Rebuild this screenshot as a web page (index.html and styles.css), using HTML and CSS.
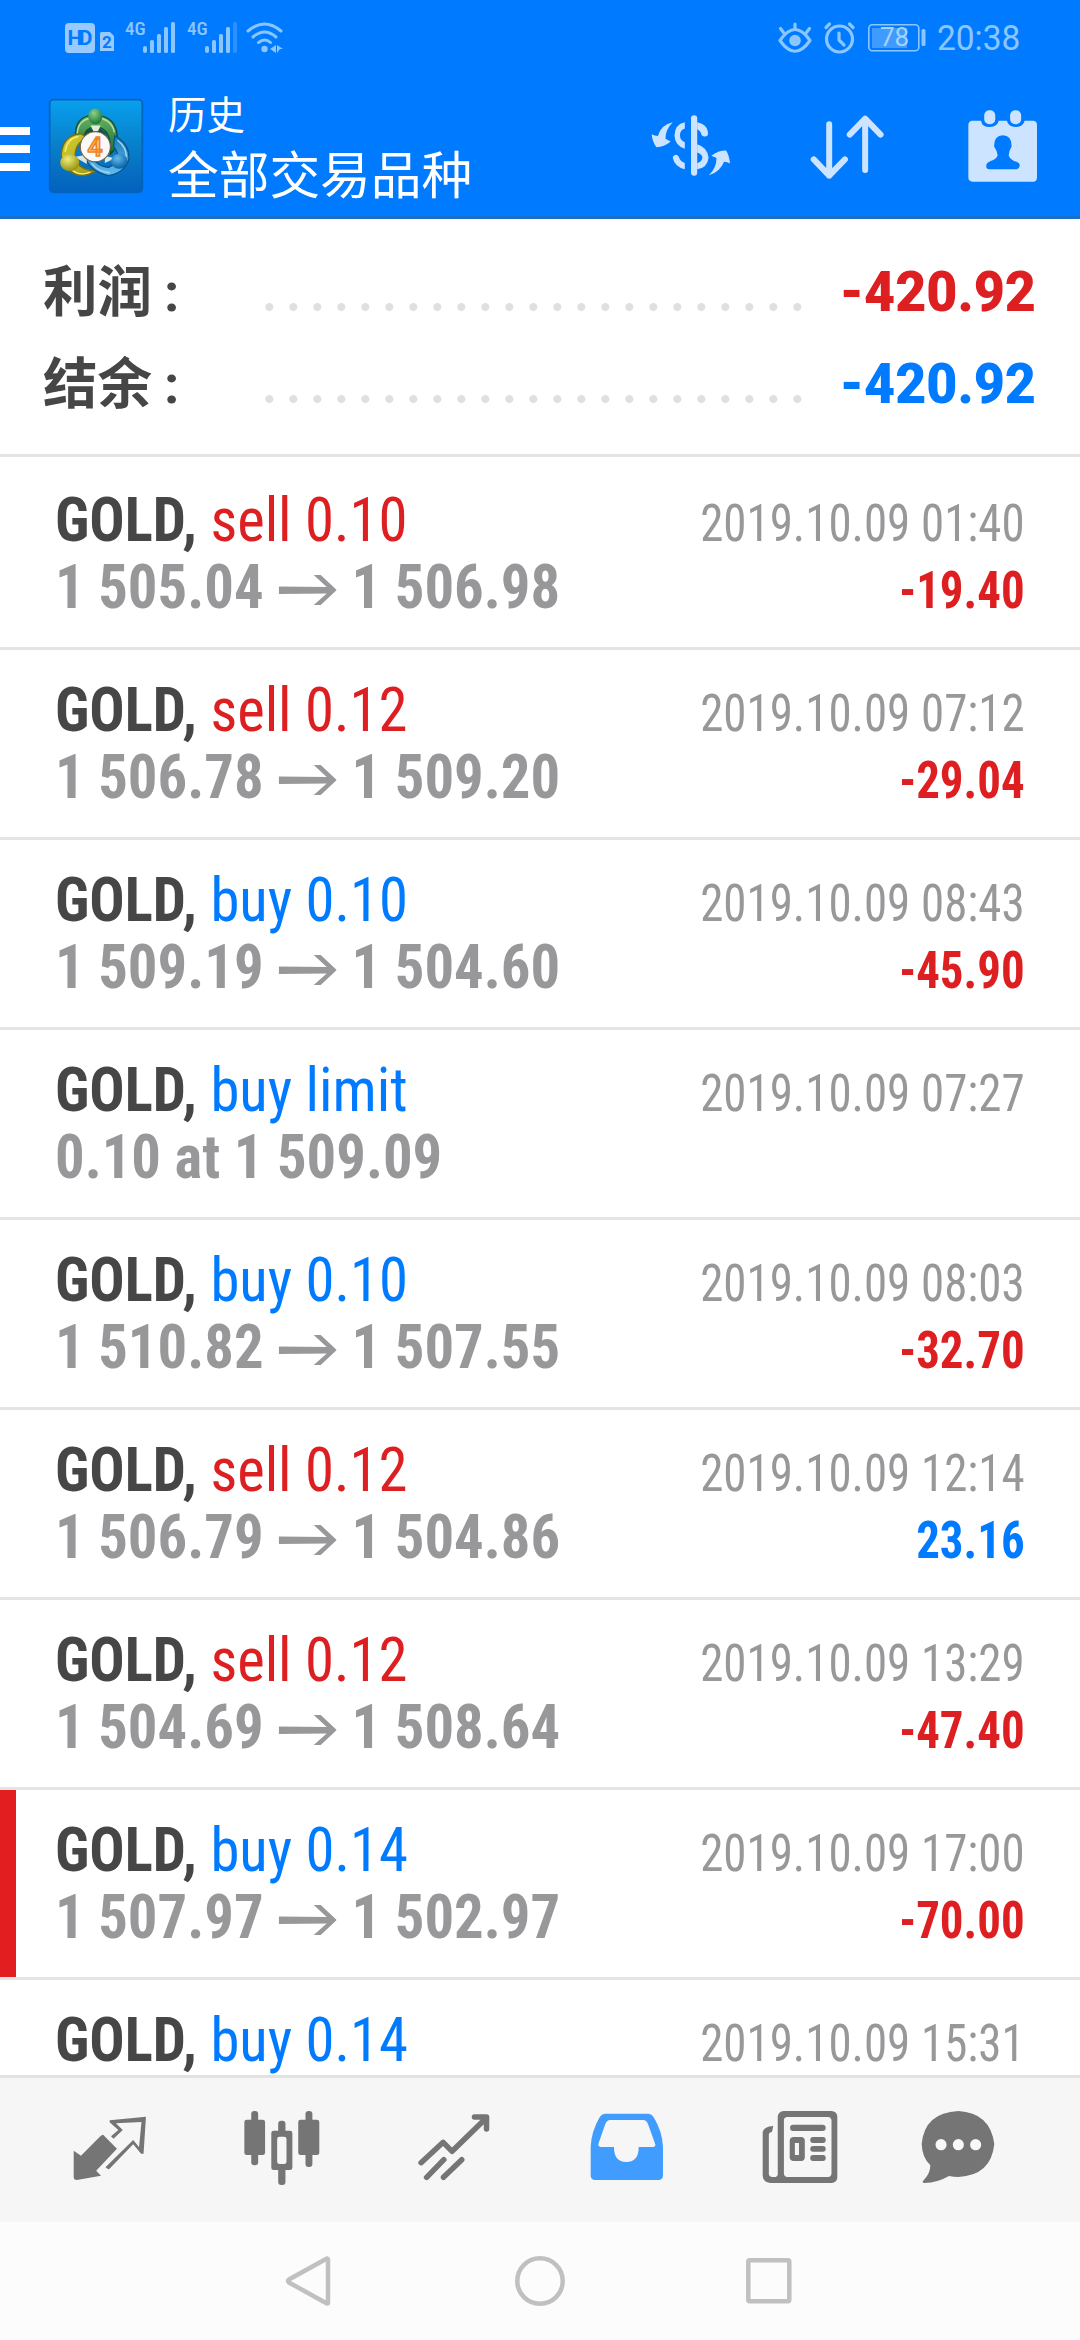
FILE: index.html
```html
<!DOCTYPE html>
<html lang="zh-CN">
<head>
<meta charset="utf-8">
<title>历史</title>
<link rel="stylesheet" href="styles.css">
</head>
<body>
<div class="screen">
  <header class="top">
    <div class="status">
      <svg class="hd" viewBox="0 0 50 32"><rect x="0" y="1" width="30" height="30" rx="4" fill="#99caff"/><text x="15" y="22.500" text-anchor="middle" textLength="25" class="hd-text">HD</text><path d="M36 10h9l4 4v15h-14v-18z" fill="#99caff"/><text x="42" y="26" text-anchor="middle" class="sim-text">2</text></svg>
      <span class="net">4G</span>
      <svg class="bars" viewBox="0 0 33 31"><g fill="#8cc6ff"><rect x="0" y="24" width="4" height="7" rx="2"/><rect x="7" y="18" width="4" height="13" rx="1.5"/><rect x="14" y="12" width="4" height="19" rx="1.5"/><rect x="21" y="5" width="4" height="26" rx="1.5"/><rect x="28" y="0" width="4" height="31" rx="1.5"/></g></svg>
      <span class="net second">4G</span>
      <svg class="bars" viewBox="0 0 33 31"><g fill="#8cc6ff"><rect x="0" y="24" width="4" height="7" rx="2"/><rect x="7" y="18" width="4" height="13" rx="1.5"/><rect x="14" y="12" width="4" height="19" rx="1.5"/><rect x="21" y="5" width="4" height="26" rx="1.5"/><rect x="28" y="0" width="4" height="31" rx="1.5" opacity=".3"/></g></svg>
      <svg class="wifi" viewBox="0 0 38 32"><g fill="none" stroke="#8cc6ff" stroke-width="3" stroke-linecap="round"><path d="M2 9q16.500-14 33 0"/><path d="M7 15q11.500-10 23 0"/><path d="M12.500 20.500q6.500-5 12 0"/></g><circle cx="18.500" cy="27" r="3.200" fill="#8cc6ff"/><path d="M24 27l6-4v8zM31 23l6 4h-3l-3 4z" fill="#8cc6ff"/></svg>
      <svg class="eye" viewBox="0 0 34 32"><g fill="none" stroke="#8cc6ff" stroke-width="3.200" stroke-linecap="round" stroke-linejoin="round"><path d="M2 18.500Q17-3.500 32 18.500Q17 40 2 18.500z"/><path d="M17 7V2M5.500 10.500L2.500 6.500M28.500 10.500l3-4"/></g><circle cx="17" cy="18.500" r="5.800" fill="#8cc6ff"/></svg>
      <svg class="alarm" viewBox="0 0 32 32"><g fill="none" stroke="#8cc6ff" stroke-width="3.200" stroke-linecap="round" stroke-linejoin="round"><circle cx="15.500" cy="17" r="13"/><path d="M15 11v7l5 5M2 5.500L5.500 2M25.500 2L29 5.500"/></g></svg>
      <svg class="battery" viewBox="0 0 58 28"><rect x=".8" y=".8" width="50" height="26" rx="3.500" fill="none" stroke="#8cc6ff" stroke-width="1.600"/><rect x="4" y="4" width="35" height="20" fill="#409bff"/><rect x="53.500" y="5" width="4" height="17" rx="1.500" fill="#8cc6ff"/><text x="26.500" y="22.300" text-anchor="middle" class="level">78</text></svg>
      <span class="clock">20:38</span>
    </div>
    <div class="bar">
      <div class="menu"><i></i><i></i><i></i></div>
      <svg class="logo" viewBox="30 34 276 276">
        <defs>
          <linearGradient id="sky" x1="0" y1="0" x2="0" y2="1"><stop offset="0" stop-color="#08a0ee"/><stop offset=".5" stop-color="#087fca"/><stop offset="1" stop-color="#0361bd"/></linearGradient>
          <linearGradient id="green" x1="0" y1="0" x2="0" y2="1"><stop offset="0" stop-color="#69b563"/><stop offset="1" stop-color="#176a31"/></linearGradient>
          <linearGradient id="gold" x1="0" y1="0" x2="1" y2="1"><stop offset="0" stop-color="#ded22f"/><stop offset="1" stop-color="#9b9714"/></linearGradient>
          <linearGradient id="blue" x1="0" y1="0" x2="0" y2="1"><stop offset="0" stop-color="#197cba"/><stop offset="1" stop-color="#63bbf0"/></linearGradient>
          <radialGradient id="g1" cx=".4" cy=".3" r=".7"><stop offset="0" stop-color="#8ed18a"/><stop offset="1" stop-color="#1d7937"/></radialGradient>
          <radialGradient id="g2" cx=".4" cy=".3" r=".7"><stop offset="0" stop-color="#f0ed80"/><stop offset="1" stop-color="#96920f"/></radialGradient>
          <radialGradient id="g3" cx=".4" cy=".3" r=".7"><stop offset="0" stop-color="#65b9eb"/><stop offset="1" stop-color="#0760a4"/></radialGradient>
        </defs>
        <rect x="32" y="36" width="272" height="272" rx="11" fill="url(#sky)" stroke="#0464bb" stroke-width="5"/>
        <g stroke-linejoin="round">
          <path d="M108 150Q103 81 165 82Q229 83 231 150Q228 183 210 196Q215 118 166 116Q132 118 131 158z" fill="url(#green)" stroke="#124f30" stroke-width="4"/>
          <path d="M113 143Q111 90 166 89Q213 90 222 132" fill="none" stroke="#b7dcac" stroke-width="4"/>
          <path d="M66 202Q68 141 122 136L144 147Q102 164 107 214Q126 245 168 245Q125 272 91 245z" fill="url(#gold)" stroke="#756f12" stroke-width="4"/>
          <path d="M77 189Q84 149 116 144M99 243Q121 261 151 249" fill="none" stroke="#f4ec88" stroke-width="4"/>
          <path d="M223 142Q265 163 265 209Q253 251 204 259Q152 246 138 209L154 204Q173 232 205 235Q250 214 220 174z" fill="url(#blue)" stroke="#0b5588" stroke-width="4"/>
          <path d="M231 155Q258 176 257 204M155 223Q176 249 209 250" fill="none" stroke="#a4daf5" stroke-width="4"/>
          <path d="M132 150Q135 122 166 118Q202 122 206 170L190 150H140z" fill="#14542e"/>
          <path d="M152 112L182 112L174 128H160z" fill="#e3ebe0"/>
          <path d="M106 204l35-7v28zM194 201l30 7-30 14z" fill="#dfe5df"/>
          <ellipse cx="166" cy="85" rx="21" ry="23" fill="url(#g1)"/>
          <ellipse cx="91" cy="221" rx="28" ry="25" fill="url(#g2)"/>
          <ellipse cx="236" cy="217" rx="24" ry="22" fill="url(#g3)"/>
        </g>
        <circle cx="166" cy="174" r="44" fill="#fafafa" stroke="#78654f" stroke-width="3"/>
        <text x="165" y="201" text-anchor="middle" class="logo-four">4</text>
      </svg>
      <div class="titles"><div class="sub">历史</div><div class="title">全部交易品种</div></div>
      <svg class="currency" viewBox="320 340 232 190" preserveAspectRatio="none"><g fill="#cce4ff"><path d="M383 365Q350 372 340 406Q330 406 322 401Q324 425 336 440Q358 440 377 423L362 415Q361 388 383 365z"/><path d="M488 525Q520 515 532 484Q542 484 549 489Q547 465 538 450Q514 450 495 466L510 473Q510 503 488 525z"/><path d="M418 365V384Q404 388 404 405Q404 419 418 425V445Q389 435 388 405Q389 371 418 365zM383 472A9 9 0 0 1 400 468Q405 483 418 488V507Q389 500 383 472zM454 365Q481 370 485 393V403Q477 412 467 404Q464 391 454 386V431Q485 441 487 472Q484 502 454 507V488Q468 484 469 472Q469 461 454 456z"/><rect x="436" y="344" width="18" height="182" rx="9"/></g></svg>
      <svg class="sort" viewBox="780 340 216 198" preserveAspectRatio="none"><g fill="none" stroke="#cce4ff" stroke-width="6" stroke-linecap="round" stroke-linejoin="round"><path vector-effect="non-scaling-stroke" d="M836 371V525M791 476L836 525L882 476"/><path vector-effect="non-scaling-stroke" d="M941 508V354M896 402L941 354L986 402"/></g></svg>
      <svg class="calendar" viewBox="1241 330 200 216" preserveAspectRatio="none"><path d="M1252 362H1279Q1281 381 1304 381Q1327 380 1330 362H1354Q1357 380 1379 381Q1402 380 1405 362H1431Q1441 363 1441 374V534Q1440 545 1430 545H1254Q1243 544 1242 534V374Q1243 363 1252 362z" fill="#cce4ff"/><rect x="1288" y="331" width="32" height="42" rx="15" fill="#cce4ff"/><rect x="1363" y="331" width="32" height="42" rx="15" fill="#cce4ff"/><path d="M1342 406Q1369 408 1367 440Q1360 451 1359 467Q1365 481 1382 485Q1394 490 1390 500Q1389 507 1380 508H1303Q1293 507 1294 498Q1293 489 1307 483Q1323 479 1327 466Q1325 451 1317 440Q1315 408 1342 406z" fill="#007aff"/></svg>
    </div>
  </header>

  <section class="summary">
    <div class="sum-row"><span class="label">利润<span class="colon">:</span></span><span class="dots"></span><b class="loss">-420.92</b></div>
    <div class="sum-row"><span class="label">结余<span class="colon">:</span></span><span class="dots"></span><b class="gain">-420.92</b></div>
  </section>

  <svg class="defs"><symbol id="arrow" viewBox="0 0 58 32" preserveAspectRatio="none"><path d="M0 12.500L48 13L35 1H42L58 16L42 31H35L48 19.500L0 20z" fill="#98989b"/></symbol></svg>

  <main class="deals">
    <article class="deal"><div class="left"><p><b>GOLD,</b> <span class="loss">sell 0.10</span></p><p class="price">1 505.04<svg class="to"><use href="#arrow"/></svg>1 506.98</p></div><div class="right"><p class="time">2019.10.09 01:40</p><p class="sumv loss">-19.40</p></div></article>
    <article class="deal"><div class="left"><p><b>GOLD,</b> <span class="loss">sell 0.12</span></p><p class="price">1 506.78<svg class="to"><use href="#arrow"/></svg>1 509.20</p></div><div class="right"><p class="time">2019.10.09 07:12</p><p class="sumv loss">-29.04</p></div></article>
    <article class="deal"><div class="left"><p><b>GOLD,</b> <span class="gain">buy 0.10</span></p><p class="price">1 509.19<svg class="to"><use href="#arrow"/></svg>1 504.60</p></div><div class="right"><p class="time">2019.10.09 08:43</p><p class="sumv loss">-45.90</p></div></article>
    <article class="deal"><div class="left"><p><b>GOLD,</b> <span class="gain">buy limit</span></p><p class="price">0.10 at 1 509.09</p></div><div class="right"><p class="time">2019.10.09 07:27</p></div></article>
    <article class="deal"><div class="left"><p><b>GOLD,</b> <span class="gain">buy 0.10</span></p><p class="price">1 510.82<svg class="to"><use href="#arrow"/></svg>1 507.55</p></div><div class="right"><p class="time">2019.10.09 08:03</p><p class="sumv loss">-32.70</p></div></article>
    <article class="deal"><div class="left"><p><b>GOLD,</b> <span class="loss">sell 0.12</span></p><p class="price">1 506.79<svg class="to"><use href="#arrow"/></svg>1 504.86</p></div><div class="right"><p class="time">2019.10.09 12:14</p><p class="sumv gain">23.16</p></div></article>
    <article class="deal"><div class="left"><p><b>GOLD,</b> <span class="loss">sell 0.12</span></p><p class="price">1 504.69<svg class="to"><use href="#arrow"/></svg>1 508.64</p></div><div class="right"><p class="time">2019.10.09 13:29</p><p class="sumv loss">-47.40</p></div></article>
    <article class="deal marked"><div class="left"><p><b>GOLD,</b> <span class="gain">buy 0.14</span></p><p class="price">1 507.97<svg class="to"><use href="#arrow"/></svg>1 502.97</p></div><div class="right"><p class="time">2019.10.09 17:00</p><p class="sumv loss">-70.00</p></div></article>
    <article class="deal"><div class="left"><p><b>GOLD,</b> <span class="gain">buy 0.14</span></p></div><div class="right"><p class="time">2019.10.09 15:31</p></div></article>
  </main>

  <nav class="tabs">
    <svg class="t1" viewBox="213 180 214 228" preserveAspectRatio="none"><path d="M300 254L340 296L280 362L294 377L224 390Q215 390 215 381V302L236 317L292 259Q296 254 300 254z" fill="#757575"/><path d="M323 259L344 240L319 217V211L424 200L417 311H410L387 283L318 357Q313 359 307 352L387 270L404 291L411 216L337 220L357 240L330 266z" fill="#757575"/></svg>
    <svg class="t2" viewBox="708 180 220 228" preserveAspectRatio="none"><g fill="#757575"><rect x="729" y="183" width="20" height="163" rx="9"/><rect x="709" y="209" width="60" height="106" rx="7"/><rect x="886" y="183" width="20" height="168" rx="9"/><rect x="865" y="209" width="61" height="106" rx="7"/><rect x="807" y="212" width="21" height="193" rx="9"/><rect x="787" y="242" width="61" height="118" rx="7"/></g><rect x="804" y="260" width="27" height="82" rx="7" fill="#f6f6f6"/></svg>
    <svg class="t3" viewBox="1212 180 212 228" preserveAspectRatio="none"><g fill="none" stroke="#757575" stroke-width="5.500" stroke-linejoin="round"><path vector-effect="non-scaling-stroke" stroke-linecap="round" d="M1221 338L1285 277L1311 304L1411 203M1376 201H1411V237M1237 382L1287 329M1286 382L1339 329"/></g></svg>
    <svg class="t4" viewBox="144 180 216 228" preserveAspectRatio="none"><path fill-rule="evenodd" d="M187 191H315Q324 192 330 202Q355 245 357 290V378Q356 389 346 390H157Q147 389 146 378V290Q148 245 172 202Q178 192 187 191zM203 210Q193 211 189 221L168 283Q168 290 174 291H214Q213 335 250 336Q287 335 286 291H329Q335 290 335 284L313 221Q309 211 299 210z" fill="#409cff"/></svg>
    <svg class="t5" viewBox="644 180 222 228" preserveAspectRatio="none"><path fill-rule="evenodd" d="M707 183H847Q862 184 864 198V384Q862 398 847 399H668Q648 397 646 378V246Q650 229 677 228L673 246Q665 246 664 254V373Q665 381 672 381H684Q690 380 690 373V198Q693 184 707 183zM718 201Q708 202 708 211V371Q709 380 718 381H837Q846 380 847 371V211Q846 202 837 201z" fill="#757575"/><g fill="#757575"><rect x="726" y="224" width="104" height="19" rx="9"/><rect x="785" y="261" width="45" height="18" rx="8"/><rect x="785" y="288" width="45" height="17" rx="8"/><rect x="785" y="315" width="45" height="18" rx="8"/><path fill-rule="evenodd" d="M734 261H761Q768 262 769 270V324Q768 332 761 333H734Q726 332 725 324V270Q726 262 734 261zM740 279V315H752V279z"/></g></svg>
    <svg class="t6" viewBox="1106 180 214 228" preserveAspectRatio="none"><path d="M1214 183Q1306 188 1318 282Q1309 376 1214 381Q1201 381 1187 378Q1154 398 1116 399Q1106 398 1115 389Q1133 370 1133 346Q1109 322 1108 282Q1116 188 1214 183z" fill="#757575"/><g fill="#f9f9f9"><ellipse cx="1164" cy="284" rx="16" ry="17"/><ellipse cx="1214" cy="284" rx="16" ry="17"/><ellipse cx="1264" cy="284" rx="16" ry="17"/></g></svg>
  </nav>
  <div class="system">
    <svg viewBox="0 0 54 54"><path d="M44 5.500V48.500Q44 50 42 49L5 28.500Q3 27 5 25.500L42 5Q44 4 44 5.500z" fill="none" stroke="#c0c0c0" stroke-width="4.500"/></svg>
    <svg viewBox="0 0 54 54"><circle cx="27" cy="27" r="22.700" fill="none" stroke="#c0c0c0" stroke-width="4.500"/></svg>
    <svg viewBox="0 0 54 54"><rect x="6.300" y="6.300" width="41" height="41" rx="1.500" fill="none" stroke="#c0c0c0" stroke-width="4.500"/></svg>
  </div>
</div>
</body>
</html>
```
FILE: styles.css
```css
* { box-sizing: border-box; }
body { margin: 0; font-family: Roboto, "Noto Sans CJK SC", sans-serif; background: #fff; }
p { margin: 0; white-space: nowrap; }
svg { display: block; flex: none; overflow: visible; }
.defs { width: 0; height: 0; }
.screen { width: 1080px; height: 2340px; overflow: hidden; display: flex; flex-direction: column; }

.top { height: 219px; flex: none; background: #007aff; border-bottom: 3px solid #146fcd; }
.status { height: 76px; padding: 22px 0 0 65px; display: flex; align-items: flex-start; color: #8cc6ff; }
.hd { width: 50px; height: 32px; }
.hd-text { font: 700 21px Roboto, sans-serif; fill: #007aff; }
.sim-text { font: 700 17px Roboto, sans-serif; fill: #007aff; }
.net { width: 18px; margin-left: 10px; font: 500 19px/14px "Roboto Condensed", Roboto, sans-serif; font-stretch: 75%; }
.second { margin-left: 11px; }
.bars { width: 33px; height: 31px; }
.wifi { width: 38px; height: 32px; margin-left: 8px; }
.eye { width: 34px; height: 32px; margin-left: 494px; }
.alarm { width: 32px; height: 32px; margin-left: 12px; }
.battery { width: 58px; height: 28px; margin: 2px 0 0 12px; }
.level { font: 400 26px Roboto, sans-serif; fill: #a6d2ff; }
.clock { margin-left: 11px; font-size: 34.500px; line-height: 33px; transform: scaleX(.97); transform-origin: left; }

.bar { height: 140px; display: flex; align-items: flex-start; padding-top: 23px; }
.menu { width: 30px; margin-top: 28px; display: flex; flex-direction: column; gap: 10px; flex: none; }
.menu i { height: 8px; background: #fff; }
.logo { width: 94px; height: 94px; margin-left: 19px; }
.logo-four { font: 500 78px Roboto, sans-serif; fill: #f9dcae; stroke: #f08423; stroke-width: 5; }
.titles { width: 480px; margin-left: 25px; margin-top: -12px; color: #fff; font-family: "Noto Sans CJK SC", sans-serif; }
.sub { font-size: 38.500px; line-height: 50px; }
.title { font-size: 50.700px; line-height: 70px; }
.currency { width: 80px; height: 63px; margin: 15px 0 0 3px; }
.sort { width: 74px; height: 66px; margin: 15px 0 0 79px; }
.calendar { width: 69px; height: 72px; margin: 11px 0 0 84px; }

.loss { color: #dd1f21; }
.gain { color: #007aff; }
.summary { height: 238px; flex: none; padding: 27px 44px 0 43px; border-bottom: 3px solid #e4e4e4; color: #464646; }
.sum-row { height: 92px; display: flex; line-height: 92px; font-size: 55px; font-weight: 700; }
.label { width: 222px; font-size: 54.500px; }
.colon { margin-left: 12px; font-family: Roboto, sans-serif; }
.dots { width: 552px; height: 24px; margin-top: 49px; background: radial-gradient(circle at 4.300px 12px, #e0e0e0 3.500px, transparent 4.500px) 0 0 / 24px 24px; }
.sum-row b { flex: 1; text-align: right; transform: scaleX(.977); transform-origin: right; }

.deals { height: 1618px; flex: none; overflow: hidden; }
.deal { height: 190px; padding: 27px 55px 0 55px; border-bottom: 3px solid #e4e4e4; display: flex; justify-content: space-between; font-family: "Roboto Condensed", Roboto, sans-serif; font-stretch: 75%; font-size: 61.400px; line-height: 67px; color: #464646; }
.deal:first-child { height: 193px; padding-top: 30px; }
.marked { background: linear-gradient(#e31e21, #e31e21) 0 0 / 16px 100% no-repeat; }
.left { transform: scaleX(.956); transform-origin: left; }
.price { display: flex; align-items: center; font-weight: 700; color: #98989b; }
.to { width: 60.700px; height: 32px; margin: 4px 15.700px 0; }
.right { text-align: right; padding-top: 3px; font-size: 51px; color: #98989b; transform: scaleX(.92); transform-origin: right; }
.sumv { font-weight: 700; }

.tabs { height: 147px; flex: none; display: flex; padding-top: 32px; background: #f6f6f6; border-top: 3px solid #e2e2e2; }
.tabs svg { height: 76px; }
.t1 { width: 74px; margin-left: 73px; }
.t2 { width: 76px; margin-left: 97px; }
.t3 { width: 73px; margin-left: 98px; }
.t4 { width: 74px; margin-left: 99px; }
.t5 { width: 76px; margin-left: 98px; }
.t6 { width: 74px; margin-left: 83px; }
.system { height: 118px; flex: none; display: flex; justify-content: center; gap: 175px; padding-top: 32px; background: #fcfcfc; }
.system svg { width: 54px; height: 54px; }
```
